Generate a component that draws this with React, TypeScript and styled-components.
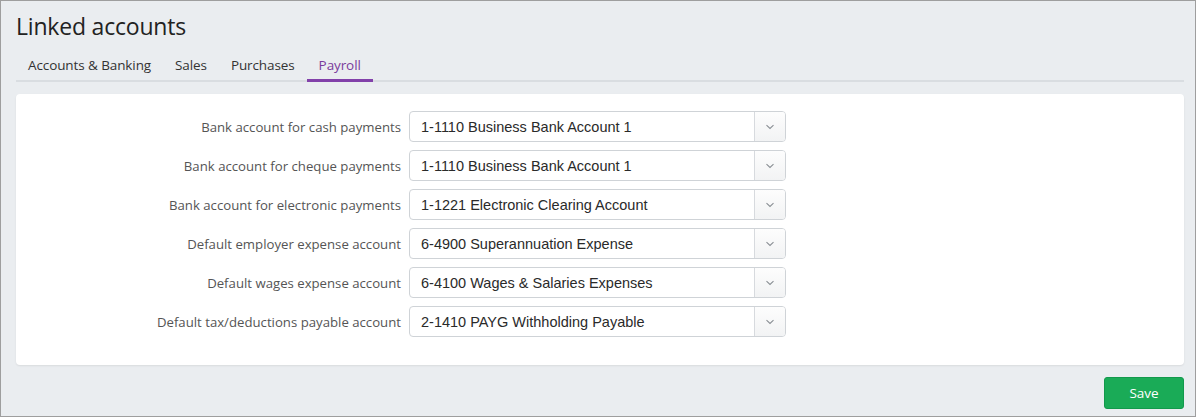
import React from 'react';
import styled, { createGlobalStyle } from 'styled-components';

const GlobalStyle = createGlobalStyle`
  html, body {
    margin: 0;
    padding: 0;
    background: #eaedf0;
  }
  * {
    box-sizing: border-box;
  }
`;

const tabs = ['Accounts & Banking', 'Sales', 'Purchases', 'Payroll'];

const rows = [
  { label: 'Bank account for cash payments', value: '1-1110 Business Bank Account 1' },
  { label: 'Bank account for cheque payments', value: '1-1110 Business Bank Account 1' },
  { label: 'Bank account for electronic payments', value: '1-1221 Electronic Clearing Account' },
  { label: 'Default employer expense account', value: '6-4900 Superannuation Expense' },
  { label: 'Default wages expense account', value: '6-4100 Wages & Salaries Expenses' },
  { label: 'Default tax/deductions payable account', value: '2-1410 PAYG Withholding Payable' },
];

const Chevron = () => (
  <svg width="10" height="6" viewBox="0 0 10 6" fill="none">
    <path d="M1.5 1.2 L5 4.5 L8.5 1.2" stroke="#8a8f94" strokeWidth="1.1" />
  </svg>
);

const App: React.FC = () => {
  return (
    <>
      <GlobalStyle />
      <Page>
        <Title>Linked accounts</Title>
        <TabBar>
          {tabs.map((t) => (
            <Tab key={t} active={t === 'Payroll'}>
              {t}
            </Tab>
          ))}
        </TabBar>
        <Card>
          {rows.map((r, i) => (
            <Row key={i}>
              <Label>{r.label}</Label>
              <Select>
                <SelectValue>{r.value}</SelectValue>
                <SelectButton>
                  <Chevron />
                </SelectButton>
              </Select>
            </Row>
          ))}
        </Card>
        <Actions>
          <SaveButton>Save</SaveButton>
        </Actions>
      </Page>
    </>
  );
};

export default App;

const Page = styled.div`
  width: 1196px;
  height: 417px;
  border: 1px solid #9e9e9e;
  background: #eaedf0;
  padding: 10px 11px 0 15px;
  font-family: 'Open Sans', 'Noto Sans', sans-serif;
  color: #333;
`;

const Title = styled.h1`
  margin: 0;
  font-family: 'Open Sans', 'Noto Sans', sans-serif;
  font-weight: 400;
  font-size: 23px;
  line-height: 30px;
  color: #222;
  letter-spacing: -0.2px;
`;

const TabBar = styled.div`
  display: flex;
  margin-top: 12px;
  border-bottom: 2px solid #d9dde1;
`;

const Tab = styled.div<{ active?: boolean }>`
  padding: 0 12px;
  height: 29px;
  line-height: 24px;
  font-size: 13.5px;
  letter-spacing: -0.1px;
  color: ${(p) => (p.active ? '#7a3c9c' : '#333')};
  border-bottom: 3px solid ${(p) => (p.active ? '#8241aa' : 'transparent')};
  margin-bottom: -2px;
`;

const Card = styled.div`
  margin-top: 12px;
  background: #fff;
  border-radius: 4px;
  box-shadow: 0 1px 2px rgba(0, 0, 0, 0.08);
  padding: 17px 0 28px;
  display: flex;
  flex-direction: column;
  gap: 8px;
`;

const Row = styled.div`
  display: flex;
  align-items: center;
  height: 31px;
`;

const Label = styled.div`
  width: 393px;
  text-align: right;
  padding-right: 8px;
  font-size: 13.2px;
  color: #555;
`;

const Select = styled.div`
  width: 377px;
  height: 31px;
  display: flex;
  border: 1px solid #cfd3d7;
  border-radius: 4px;
  overflow: hidden;
`;

const SelectValue = styled.div`
  flex: 1;
  padding-left: 11px;
  display: flex;
  align-items: center;
  font-family: 'Liberation Sans', Arial, sans-serif;
  font-size: 14.5px;
  color: #2a2a2a;
`;

const SelectButton = styled.div`
  width: 31px;
  border-left: 1px solid #d7dade;
  background: linear-gradient(#fdfdfd, #f2f3f4);
  display: flex;
  align-items: center;
  justify-content: center;
`;

const Actions = styled.div`
  display: flex;
  justify-content: flex-end;
  margin-top: 12px;
`;

const SaveButton = styled.button`
  width: 80px;
  height: 32px;
  border: 1px solid #12994c;
  border-radius: 3px;
  background: #1aab57;
  color: #fff;
  font-family: 'Open Sans', 'Noto Sans', sans-serif;
  font-size: 13.5px;
  cursor: pointer;
`;
